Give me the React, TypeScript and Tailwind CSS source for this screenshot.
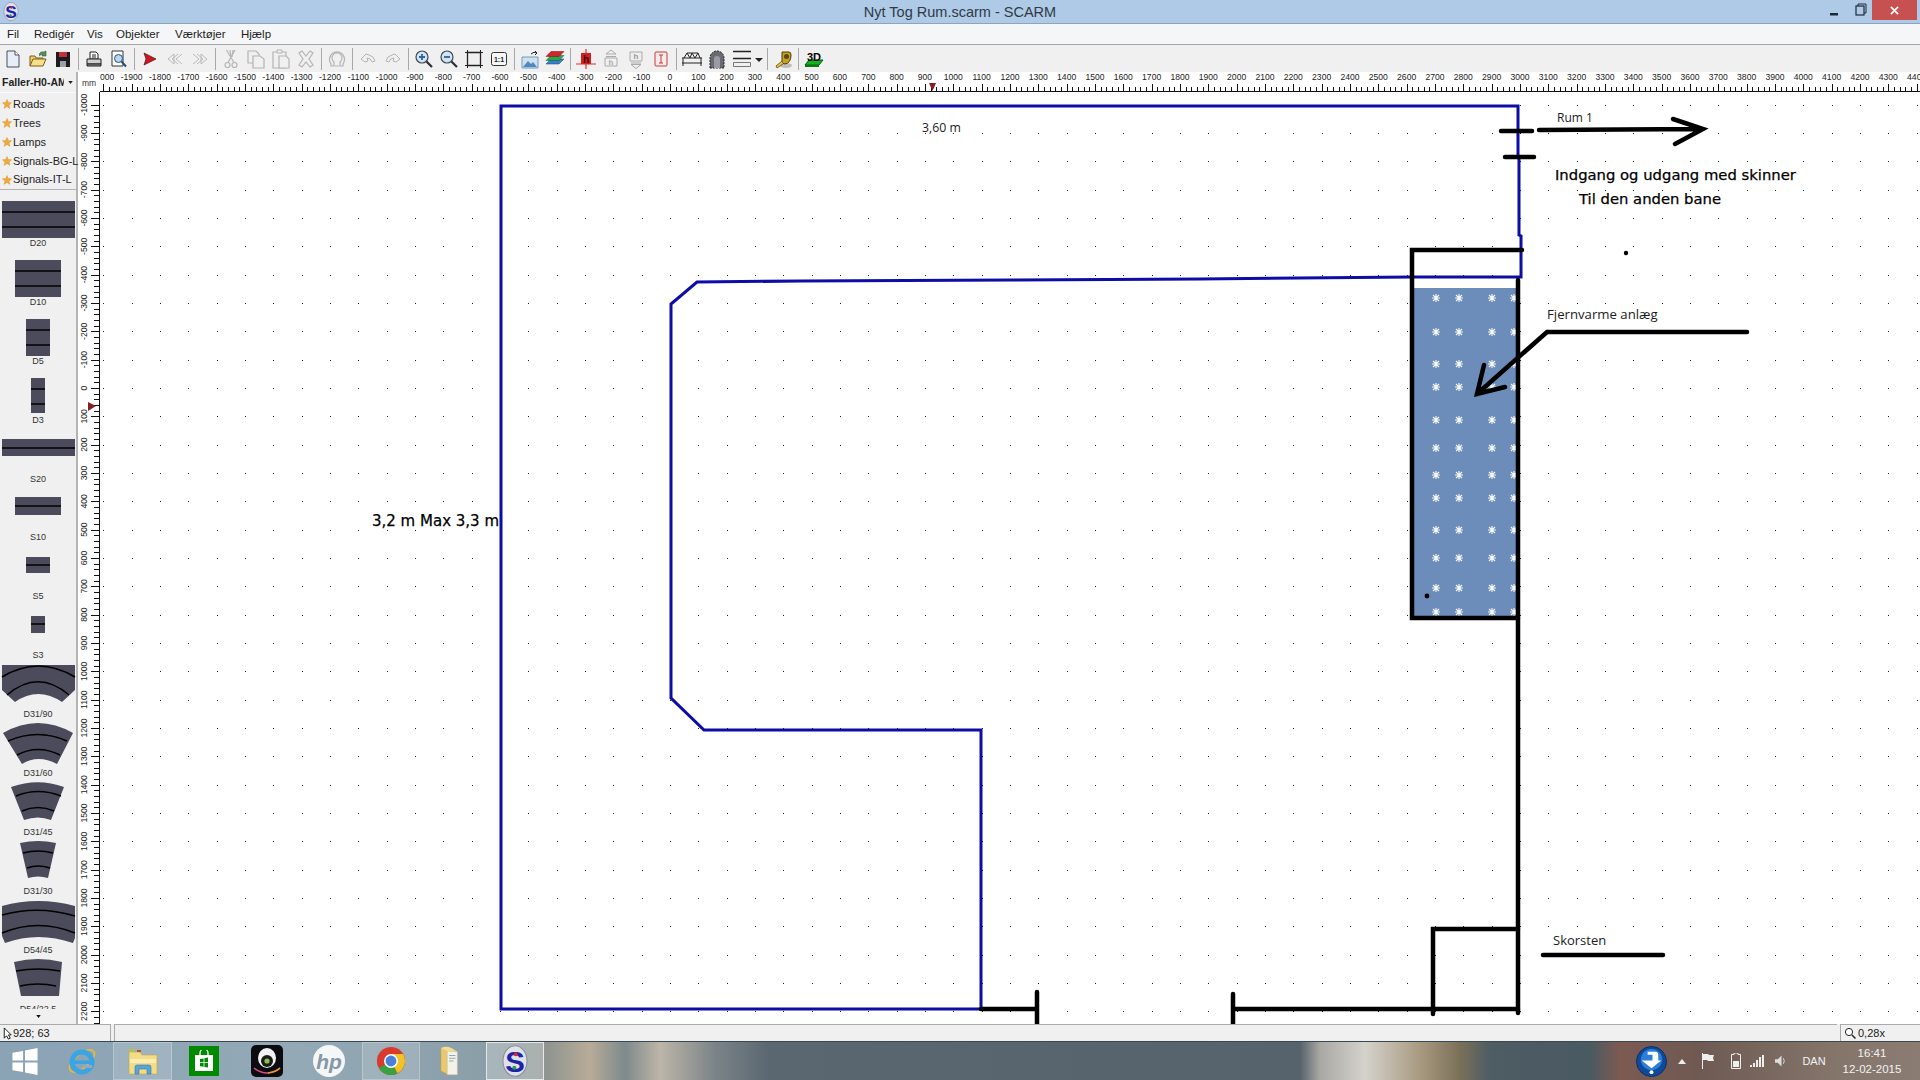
import React from 'react';

const ORIGIN_X = 670;
const ORIGIN_Y = 388;
const STEP = 28.333;

const snap = (v: number) => Math.round(v) + 0.5;

function makeDots() {
  let d = '';
  for (let i = -20; i < 45; i++) {
    for (let j = -10; j < 23; j++) {
      d += `M${Math.round(ORIGIN_X + i * STEP)} ${Math.round(ORIGIN_Y + j * STEP)}h1v1h-1z`;
    }
  }
  return d;
}

function TopRuler() {
  let ticks = 'M100 91.5H1920';
  for (let k = -100; k < 225; k++) {
    const x = snap(ORIGIN_X + (k * STEP) / 5);
    if (x < 100) continue;
    ticks += `M${x} 91V${k % 5 === 0 ? 84 : 87}`;
  }
  const labels = Array.from({ length: 65 }, (_, i) => (i - 20) * 100);
  return (
    <svg className="block h-[20px] w-[1820px]" viewBox="100 72 1820 20">
      <path d={ticks} stroke="#111" fill="none" />
      {labels.map((v) => (
        <text key={v} x={ORIGIN_X + (v / 100) * STEP} y={77} textAnchor="middle" dominantBaseline="central" fontSize="8.6" fill="#222">
          {v}
        </text>
      ))}
      <polygon points="929,83 936,83 932.5,91" fill="#8a1c24" />
    </svg>
  );
}

function LeftRuler() {
  let ticks = 'M99.5 92V1024';
  for (let k = -50; k < 115; k++) {
    const y = snap(ORIGIN_Y + (k * STEP) / 5);
    if (y < 92) continue;
    ticks += `M99 ${y}H${k % 5 === 0 ? 91 : 94}`;
  }
  const labels = Array.from({ length: 33 }, (_, i) => (i - 10) * 100);
  return (
    <svg className="block h-[932px] w-[22px]" viewBox="78 92 22 932">
      <path d={ticks} stroke="#111" fill="none" />
      {labels.map((v) => {
        const y = ORIGIN_Y + (v / 100) * STEP;
        return (
          <text key={v} transform={`translate(84 ${y}) rotate(-90)`} textAnchor="middle" dominantBaseline="central" fontSize="8.6" fill="#222">
            {v}
          </text>
        );
      })}
      <polygon points="88,402 88,411 96,406" fill="#8a1c24" />
    </svg>
  );
}

const HEAT_COLS = [1436, 1459, 1492, 1514];
const HEAT_ROWS = [298, 332, 364, 387, 420, 448, 475, 498, 530, 558, 588, 612];

function Canvas() {
  return (
    <svg className="block h-[932px] w-[1820px]" viewBox="100 92 1820 932">
      <path d={makeDots()} fill="#222" />

      {/* fjernvarme */}
      <rect x="1414" y="288" width="102" height="328" fill="#6c8cb9" />
      {HEAT_COLS.map((x) =>
        HEAT_ROWS.map((y) => (
          <path
            key={`${x}-${y}`}
            d={`M${x - 4} ${y}h8M${x} ${y - 4}v8M${x - 3} ${y - 3}l6 6M${x + 3} ${y - 3}l-6 6`}
            stroke="#f2f5fa"
            strokeWidth="1.2"
          />
        ))
      )}

      <g fill="none" stroke="#0d0da6" strokeWidth="3">
        <path d="M501 106H1518V155L1519 160V235L1521 236V277H1412L1200 279L1010 280L801 281L697 282L671 304V698L704 730H981V1009H501Z" />
      </g>

      <g fill="none" stroke="#000" strokeWidth="4.5" strokeLinecap="round">
        <path d="M1522 250H1412V618H1518" />
        <path d="M1518 280V1013" />
        <path d="M981 1009H1037M1037 992V1028" />
        <path d="M1233 994V1026M1233 1009H1518" />
        <path d="M1518 929H1433V1014" />
        <path d="M1543 955H1663" />
        <path d="M1747 332H1547L1477 394M1484 365L1477 394L1505 387" />
        <path d="M1539 130L1703 129M1673 119L1703 129L1675 144" />
        <path d="M1501 131H1532M1505 157H1534" />
      </g>
      <circle cx="1626" cy="253" r="2.2" fill="#000" />
      <circle cx="1427" cy="596" r="2.4" fill="#000" />

      <g dominantBaseline="central" fill="#1c1c1c">
        <text x="922" y="127" fontSize="12.3" className="[font-family:'Open_Sans',sans-serif]">3,60 m</text>
        <text x="372" y="521" fontSize="15" fill="#000" stroke="#000" strokeWidth="0.25" className="[font-family:'DejaVu_Sans',sans-serif]">3,2 m Max 3,3 m</text>
        <text x="1557" y="117" fontSize="12" className="[font-family:'Open_Sans',sans-serif]">Rum 1</text>
        <text x="1555" y="174" fontSize="14.8" fill="#000" stroke="#000" strokeWidth="0.25" className="[font-family:'DejaVu_Sans',sans-serif]">Indgang og udgang med skinner</text>
        <text x="1579" y="198" fontSize="14.8" fill="#000" stroke="#000" strokeWidth="0.25" className="[font-family:'DejaVu_Sans',sans-serif]">Til den anden bane</text>
        <text x="1547" y="314" fontSize="13.2" className="[font-family:'Open_Sans',sans-serif]">Fjernvarme anlæg</text>
        <text x="1553" y="940" fontSize="13" className="[font-family:'Open_Sans',sans-serif]">Skorsten</text>
      </g>
    </svg>
  );
}

function Straight({ x, w, y, h, lines }: { x: number; w: number; y: number; h: number; lines: number[] }) {
  return (
    <>
      <rect x={x} y={y} width={w} height={h} fill="#4b4b5c" />
      {lines.map((l) => (
        <path key={l} d={`M${x} ${l}h${w}`} stroke="#000" strokeWidth="1.5" />
      ))}
    </>
  );
}

function Curve({ body, lines, dy = -8 }: { body: string; lines: string[]; dy?: number }) {
  return (
    <g transform={`translate(0 ${dy})`}>
      <path d={body} fill="#4b4b5c" />
      {lines.map((l) => (
        <path key={l} d={l} fill="none" stroke="#000" strokeWidth="1.5" />
      ))}
    </g>
  );
}

const PIECES: { label: string; shape: React.ReactNode }[] = [
  { label: 'D20', shape: <Straight x={2} w={73} y={0} h={37} lines={[11, 26]} /> },
  { label: 'D10', shape: <Straight x={15} w={46} y={0} h={37} lines={[11, 26]} /> },
  { label: 'D5', shape: <Straight x={26} w={24} y={0} h={37} lines={[11, 26]} /> },
  { label: 'D3', shape: <Straight x={31} w={14} y={0} h={35} lines={[11, 26]} /> },
  { label: 'S20', shape: <Straight x={2} w={73} y={2} h={17} lines={[11]} /> },
  { label: 'S10', shape: <Straight x={15} w={46} y={2} h={18} lines={[11]} /> },
  { label: 'S5', shape: <Straight x={26} w={24} y={3} h={16} lines={[11]} /> },
  { label: 'S3', shape: <Straight x={31} w={14} y={3} h={17} lines={[11]} /> },
  {
    label: 'D31/90',
    shape: <Curve body="M2 1H75V26L62 38Q38 22 15 38L2 26Z" lines={['M2 13Q38 -9 75 13', 'M7 31Q38 4.5 69 31']} />,
  },
  {
    label: 'D31/60',
    shape: <Curve body="M3 10Q38 -10 73 10L57 41Q38 31 22 41Z" lines={['M8 18Q38 5 67 18', 'M17 32Q38 21 60 32']} />,
  },
  {
    label: 'D31/45',
    shape: <Curve body="M11 5Q38 -4.5 64 5L51 38Q38 33 24 38Z" lines={['M16 14Q38 5 61 14', 'M22 29Q38 22 54 29']} />,
  },
  {
    label: 'D31/30',
    shape: <Curve body="M20 2Q38 -2 56 2L48 37Q38 34 28 37Z" lines={['M23 12Q38 8 53 12', 'M27 27Q38 23 50 27']} />,
  },
  {
    label: 'D54/45',
    shape: <Curve dy={-7} body="M2 5Q38 -5 75 5V37L73 42Q38 30 5 42L2 35Z" lines={['M2 14Q38 4 75 15', 'M2 32Q38 17 75 32']} />,
  },
  {
    label: 'D54/22.5',
    shape: <Curve body="M14 3Q38 -3 62 3L59 37H21Z" lines={['M16 12Q38 8 60 12', 'M20 27Q38 23 56 27']} />,
  },
];

const Star = () => (
  <svg viewBox="0 0 10 10" className="h-[10px] w-[10px] shrink-0">
    <polygon points="5,0.5 6.3,3.6 9.6,3.8 7,6 7.9,9.4 5,7.5 2.1,9.4 3,6 0.4,3.8 3.7,3.6" fill="#f2a93b" stroke="#d98a1c" strokeWidth="0.4" />
  </svg>
);

function LeftPanel() {
  return (
    <div className="flex h-full w-[78px] shrink-0 flex-col border-r-2 border-[#b4b4b4] bg-[#f0f0f0]">
      <div className="flex h-[21px] shrink-0 items-center border-b border-[#fafafa] pl-[2px]">
        <span className="w-[62px] overflow-hidden whitespace-nowrap text-[10.5px] font-bold leading-none text-[#222]">Faller-H0-AM</span>
        <svg viewBox="0 0 6 4" className="ml-[4px] h-[3px] w-[5px]">
          <polygon points="0,0 6,0 3,4" fill="#222" />
        </svg>
      </div>
      <div className="flex h-[97px] shrink-0 flex-col border-b border-[#b4b4b4] pt-[2px]">
        {['Roads', 'Trees', 'Lamps', 'Signals-BG-L', 'Signals-IT-L'].map((t) => (
          <div key={t} className="flex h-[19px] items-center gap-[1px] pl-[2px] text-[11px] text-[#222]">
            <Star />
            <span className="whitespace-nowrap">{t}</span>
          </div>
        ))}
      </div>
      <div className="flex-1 overflow-hidden pt-[11px]">
        {PIECES.map((p) => (
          <div key={p.label} className="flex h-[58.9px] flex-col items-center overflow-visible">
            <svg viewBox="0 0 76 36" className="block h-[36px] w-[76px] shrink-0 overflow-visible">
              {p.shape}
            </svg>
            <span className="h-[12px] text-[9px] leading-[12px] text-[#333]">{p.label}</span>
          </div>
        ))}
      </div>
      <div className="flex h-[15px] shrink-0 items-center justify-center">
        <svg viewBox="0 0 6 4" className="h-[3px] w-[5px]">
          <polygon points="0,0 6,0 3,4" fill="#111" />
        </svg>
      </div>
    </div>
  );
}

/* toolbar icons: 20x20 box, drawn to match */
const gray = { fill: 'none', stroke: '#b4b4b4', strokeWidth: 1.2 } as const;

const ICONS: Record<string, React.ReactNode> = {
  new: (
    <>
      <path d="M4 2h8l4 4v12H4z" fill="#e8eef8" stroke="#45505c" />
      <path d="M12 2v4h4" fill="#fff" stroke="#45505c" />
    </>
  ),
  open: (
    <>
      <path d="M2 17V7h5l1 2h7v2" fill="#f2d16b" stroke="#7a5a18" />
      <path d="M2 17l3-7h13l-3 7z" fill="#f7e08c" stroke="#7a5a18" />
      <path d="M11 5q2-3 5-2l2-1v5h-4l1-1q-2-1-4 1" fill="#5a8f5a" stroke="#2f5f3a" strokeWidth="0.6" />
    </>
  ),
  save: (
    <>
      <path d="M3 3h14v15H3z" fill="#1c1c20" />
      <path d="M6 3h8v5H6z" fill="#c6303a" />
      <path d="M7 12h6v6H7z" fill="#9aa0a8" />
    </>
  ),
  print: (
    <>
      <path d="M6 3h6l2 2v5H6z" fill="#fff" stroke="#222" />
      <path d="M8 6h4M8 8h4" stroke="#222" />
      <path d="M3 10h14v5H3z" fill="#cfcfcf" stroke="#222" />
      <path d="M3 15h14v2H3z" fill="#8e8e8e" stroke="#222" />
    </>
  ),
  preview: (
    <>
      <path d="M3 2h11v15H3z" fill="#fff" stroke="#333" />
      <circle cx="9.5" cy="9.5" r="4" fill="#b8d6ee" stroke="#24507a" />
      <path d="M12.5 12.5l4.5 5" stroke="#24507a" strokeWidth="2" />
    </>
  ),
  play: <path d="M4 4l12 6-12 6 2-6z" fill="#cc1620" stroke="#501018" strokeWidth="0.7" />,
  prev: <path d="M9 5l-6 5 6 5V5zM17 5l-6 5 6 5M13 5l-6 5 6 5" {...gray} strokeWidth="0.9" />,
  next: <path d="M3 5l6 5-6 5M7 5l6 5-6 5M11 5l6 5-6 5V5z" {...gray} strokeWidth="0.9" />,
  cut: (
    <>
      <circle cx="6.5" cy="16" r="2.5" {...gray} />
      <circle cx="13.5" cy="16" r="2.5" {...gray} />
      <path d="M7 13.5L14 1M5.5 1l7.5 12.5M9 1L10 8M11 8l1-7" {...gray} />
    </>
  ),
  copy: (
    <>
      <path d="M2 2h8l3 3v9H2z" {...gray} />
      <path d="M7 7h7l4 3v9H7z" fill="#f0f0f0" stroke="#b4b4b4" strokeWidth="1.2" />
    </>
  ),
  paste: (
    <>
      <path d="M2 3h13v16H2z" {...gray} />
      <path d="M6 1h5v3H6z" fill="#f0f0f0" stroke="#b4b4b4" />
      <path d="M8 7h7l3 3v9H8z" fill="#f0f0f0" stroke="#b4b4b4" strokeWidth="1.2" />
    </>
  ),
  del: <path d="M3 4l3-2 4 5 4-5 3 2-4 6 4 6-3 2-4-5-4 5-3-2 4-6z" {...gray} />,
  rotate: <path d="M7 17V13a5 5 0 1 1 6 0v4h3v-2l1-2a7.5 7.5 0 1 0-14 0l1 2v2zM8 17h4" {...gray} />,
  undo: <path d="M3 10l5-5 3 1q5 1 6 6l-3 1q-1-4-5-4l1 3-3 1z" {...gray} strokeWidth="1" />,
  redo: <path d="M17 10l-5-5-3 1q-5 1-6 6l3 1q1-4 5-4l-1 3 3 1z" {...gray} strokeWidth="1" />,
  zoomIn: (
    <>
      <circle cx="8" cy="8" r="6" fill="#d5e3ef" stroke="#3a4a58" strokeWidth="1.2" />
      <path d="M5 8h6M8 5v6" stroke="#2a64a8" strokeWidth="1.8" />
      <path d="M12.5 12.5l5.5 5.5" stroke="#2a3038" strokeWidth="2.2" />
    </>
  ),
  zoomOut: (
    <>
      <circle cx="8" cy="8" r="6" fill="#d5e3ef" stroke="#3a4a58" strokeWidth="1.2" />
      <path d="M5 8h6" stroke="#2a64a8" strokeWidth="1.8" />
      <path d="M12.5 12.5l5.5 5.5" stroke="#2a3038" strokeWidth="2.2" />
    </>
  ),
  fit: (
    <>
      <path d="M3.5 3.5h13v13h-13z" fill="none" stroke="#222" strokeWidth="1.3" />
      <path d="M1 3.5h5M14 3.5h5M1 16.5h5M14 16.5h5M3.5 1v5M16.5 1v5M3.5 14v5M16.5 14v5" stroke="#222" />
    </>
  ),
  one: (
    <>
      <rect x="2.5" y="3.5" width="15" height="13" rx="2" fill="#f6f6f6" stroke="#333" />
      <text x="10" y="10.2" textAnchor="middle" dominantBaseline="central" fontSize="7" fontWeight="700" fill="#222">1:1</text>
    </>
  ),
  image: (
    <>
      <path d="M2 8h16v11H2z" fill="#cfe0ee" stroke="#6f9ac0" />
      <path d="M3 18l5-6 3 3 2-2 4 5z" fill="#4f88bc" />
      <path d="M11 5q3-3 6-1M15 2l2 2-2 2" fill="none" stroke="#222" />
    </>
  ),
  layers: (
    <>
      <path d="M1 15l5-5h13l-5 5z" fill="#3b7fd0" stroke="#1a3f72" strokeWidth="0.5" />
      <path d="M1 11.5l5-5h13l-5 5z" fill="#27a84a" stroke="#125a26" strokeWidth="0.5" />
      <path d="M1 7.5l5-5h13l-5 5z" fill="#d32530" stroke="#701016" strokeWidth="0.5" />
    </>
  ),
  track: (
    <>
      <path d="M10 0v20M0 15h20" stroke="#e02a2a" strokeWidth="1.2" />
      <rect x="5" y="4" width="10" height="11" fill="#d42020" />
      <text x="10" y="10" textAnchor="middle" dominantBaseline="central" fontSize="10" fontWeight="700" fill="#3a0808">h</text>
    </>
  ),
  hUp: (
    <>
      <path d="M5 5l5-4 5 4z" fill="none" stroke="#aaa" />
      <path d="M5 7.5h10M4 9h12v8H4z" fill="none" stroke="#aaa" />
      <text x="10" y="13" textAnchor="middle" dominantBaseline="central" fontSize="8" fontWeight="700" fill="#aaa">h</text>
    </>
  ),
  hDown: (
    <>
      <path d="M4 3h12v9H4z" fill="#eee" stroke="#aaa" />
      <text x="10" y="7.5" textAnchor="middle" dominantBaseline="central" fontSize="8" fontWeight="700" fill="#999">h</text>
      <path d="M5 14h10M5 15.5l5 4 5-4z" fill="none" stroke="#aaa" />
    </>
  ),
  height: (
    <>
      <rect x="4" y="3" width="12" height="14" rx="1" fill="#fbeaea" stroke="#c43a3a" />
      <path d="M8 6h4M10 6v8M8 14h4" stroke="#c43a3a" />
    </>
  ),
  bridge: <path d="M0 9h20M1 9v8M19 9v8M0 14h20M2 9l3-5 3 5 2-5 3 5 3-5 2 5M5 4h11" fill="none" stroke="#222" />,
  tunnel: (
    <>
      <path d="M3 19V9a7 7 0 0 1 14 0v10z" fill="#6a6a72" stroke="#222" strokeDasharray="2 1" />
      <path d="M7 19V10a3 3 0 0 1 6 0v9z" fill="#9a9aa2" />
    </>
  ),
  lines: (
    <>
      <path d="M1 2.5h18M1 9.5h18" stroke="#222" strokeWidth="1.4" />
      <path d="M1.5 13.5h17v4h-17z" fill="none" stroke="#777" />
    </>
  ),
  drop: <polygon points="6,9 14,9 10,13" fill="#222" />,
  tape: (
    <>
      <ellipse cx="13" cy="16.5" rx="6" ry="2.5" fill="#bdbdbd" />
      <path d="M9 3h7q2 0 2 3q0 8-6 9q-3 0-3-3z" fill="#caa01f" stroke="#4a3a10" />
      <circle cx="13.5" cy="7.5" r="2.5" fill="#5a4a1a" />
      <path d="M9 12l-6 5 1 2 6-4" fill="#e6c33a" stroke="#4a3a10" strokeWidth="0.7" />
    </>
  ),
  threeD: (
    <>
      <path d="M1 16l4-5h14l-4 5z" fill="#12b31c" stroke="#0a5a10" />
      <path d="M1 16h14v2H1z" fill="#0a7a12" />
      <text x="10" y="8" textAnchor="middle" dominantBaseline="central" fontSize="11" fontWeight="700" fill="#000">3D</text>
    </>
  ),
};

const TOOLBAR = [
  ['new', 'open', 'save'],
  ['print', 'preview'],
  ['play', 'prev', 'next'],
  ['cut', 'copy', 'paste', 'del'],
  ['rotate'],
  ['undo', 'redo'],
  ['zoomIn', 'zoomOut', 'fit', 'one'],
  ['image', 'layers'],
  ['track', 'hUp', 'hDown', 'height'],
  ['bridge', 'tunnel', 'lines', 'drop'],
  ['tape'],
  ['threeD'],
];

function Toolbar() {
  return (
    <div className="flex h-[28px] shrink-0 items-center border-t border-[#a6a6a6] bg-[#f0f0f0]">
      {TOOLBAR.map((group, i) => (
        <React.Fragment key={i}>
          {i > 0 && (
            <div className="flex h-full w-[6px] items-center justify-center">
              <div className="h-[22px] w-[1px] bg-[#a8a8a8]" />
            </div>
          )}
          {group.map((name) => (
            <div key={name} className={name === 'drop' ? 'flex w-[10px] justify-center' : 'flex w-[25px] justify-center'}>
              <svg viewBox={name === 'drop' ? '5 0 10 20' : '0 0 20 20'} className={name === 'drop' ? 'h-[20px] w-[10px]' : 'h-[20px] w-[20px]'}>
                {ICONS[name]}
              </svg>
            </div>
          ))}
        </React.Fragment>
      ))}
    </div>
  );
}

const MENUS: [string, string][] = [
  ['Fil', 'w-[27px]'],
  ['Redigér', 'w-[53px]'],
  ['Vis', 'w-[29px]'],
  ['Objekter', 'w-[59px]'],
  ['Værktøjer', 'w-[66px]'],
  ['Hjælp', 'w-[40px]'],
];

const ScarmLogo = ({ size }: { size: string }) => (
  <svg viewBox="0 0 20 24" className={size}>
    <ellipse cx="10" cy="12" rx="9" ry="11.5" fill="#dfe2ea" stroke="#8a8ea0" strokeWidth="0.8" />
    <text x="10" y="12.5" textAnchor="middle" dominantBaseline="central" fontSize="22" fontWeight="700" fill="#1e22a8">S</text>
    <circle cx="10.5" cy="7" r="1.5" fill="#d0263a" />
    <circle cx="9.5" cy="17" r="1.5" fill="#26a04a" />
  </svg>
);

function TaskIcon({ w, active, dim, children }: { w: string; active?: boolean; dim?: boolean; children: React.ReactNode }) {
  const box = active ? 'border border-[#e4e8ea] bg-[#ffffff40]' : dim ? 'border border-[#ffffff40] bg-[#ffffff26]' : '';
  return <div className={`flex h-full shrink-0 items-center justify-center ${w} ${box}`}>{children}</div>;
}

function Taskbar() {
  return (
    <div className="flex h-[39px] shrink-0 items-stretch border-t border-[#3c4850] bg-[linear-gradient(90deg,#8aa3b5_0,#93a9b6_300px,#8a9fa8_480px,#8f9590_548px,#b8ab98_590px,#7e8a8c_625px,#bdb5a8_660px,#7a8488_715px,#5a6670_770px,#56626c_1300px,#a9a8a4_1320px,#d5d2cc_1365px,#a89a80_1420px,#7a7058_1460px,#4e5c64_1490px,#4a5a62_1590px,#7c5a52_1620px,#6e5a52_1700px,#85766c_1840px,#8a7c72_1920px)]">
      <TaskIcon w="w-[50px]">
        <svg viewBox="0 0 28 28" className="h-[27px] w-[28px]">
          <path d="M1 5l11-2v10H1zM14 2.6L27 0v13H14zM1 15h11v10L1 23zM14 15h13v13l-13-2.6z" fill="#fff" />
        </svg>
      </TaskIcon>
      <div className="w-[63px] shrink-0">
        <div className="flex h-full items-center justify-center">
          <svg viewBox="0 0 32 32" className="h-[32px] w-[32px]">
            <ellipse cx="16" cy="16" rx="15" ry="7" transform="rotate(-40 16 16)" fill="none" stroke="#e0b83a" strokeWidth="2" />
            <circle cx="16" cy="17" r="10" fill="none" stroke="#3aa4e4" strokeWidth="5" />
            <rect x="8" y="15.5" width="16" height="3.5" fill="#3aa4e4" />
            <rect x="18" y="20" width="8" height="3" fill="#9aa9b5" />
          </svg>
        </div>
      </div>
      <TaskIcon w="w-[59px]" dim>
        <svg viewBox="0 0 32 30" className="h-[30px] w-[32px]">
          <path d="M2 6h11l2 3h15v19H2z" fill="#f3dc86" stroke="#c6a64a" strokeWidth="0.6" />
          <path d="M2 3h6v3H2z" fill="#b8c050" />
          <rect x="10" y="4" width="4" height="2" fill="#c05030" />
          <path d="M3 13h26v4H3z" fill="#fbecb0" />
          <path d="M8 28v-7q0-2 2-2h12q2 0 2 2v7h-4v-5h-8v5z" fill="#5aa4d8" stroke="#2f78b0" strokeWidth="0.6" />
        </svg>
      </TaskIcon>
      <TaskIcon w="w-[64px]">
        <div className="flex h-[30px] w-[30px] items-center justify-center bg-[#008a00]">
          <svg viewBox="0 0 20 22" className="h-[22px] w-[20px]">
            <path d="M6 5V3a4 4 0 0 1 8 0v2" fill="none" stroke="#fff" strokeWidth="1.3" />
            <path d="M1 5h18v16H1z" fill="#fff" />
            <path d="M6 9l3.6-.6v3.8H6zM10.4 8.2L14 7.6v4.6h-3.6zM6 13h3.6v3.8L6 16.2zM10.4 13H14v4.6l-3.6-.6z" fill="#008a00" />
          </svg>
        </div>
      </TaskIcon>
      <TaskIcon w="w-[62px]">
        <svg viewBox="0 0 32 32" className="h-[32px] w-[32px]">
          <rect width="32" height="32" rx="5" fill="#0c0c10" />
          <ellipse cx="16" cy="13" rx="9" ry="10" fill="#f2f2f2" />
          <circle cx="16" cy="16" r="6" fill="#1a1c18" />
          <circle cx="16" cy="16" r="2.6" fill="#8fc04a" />
          <path d="M3 23q13 10 26 0" fill="none" stroke="#e04a8a" strokeWidth="1.5" />
          <path d="M17 28q8-1 12-5" fill="none" stroke="#e6a020" strokeWidth="1.5" />
        </svg>
      </TaskIcon>
      <TaskIcon w="w-[62px]">
        <svg viewBox="0 0 32 32" className="h-[32px] w-[32px]">
          <circle cx="16" cy="16" r="16" fill="#f4f6f8" />
          <text x="16" y="16.5" textAnchor="middle" dominantBaseline="central" fontSize="21" fontStyle="italic" fontWeight="700" fill="#8598a6">hp</text>
        </svg>
      </TaskIcon>
      <div className="flex w-[62px] shrink-0 items-stretch justify-center">
        <TaskIcon w="w-[58px]" dim>
          <svg viewBox="0 0 32 32" className="h-[30px] w-[30px]">
            <circle cx="16" cy="16" r="15" fill="#d83a2e" />
            <path d="M16 16L3 23.5A15 15 0 0 0 16 31q4 0 7-2z" fill="#3aa040" />
            <path d="M16 16L23 29A15 15 0 0 0 29 8.5L16 8.5z" fill="#f0c426" />
            <circle cx="16" cy="16" r="7.4" fill="#fff" />
            <circle cx="16" cy="16" r="5.8" fill="#4a80d8" />
          </svg>
        </TaskIcon>
      </div>
      <TaskIcon w="w-[56px]">
        <svg viewBox="0 0 24 34" className="h-[32px] w-[22px]">
          <path d="M2 3l8 2v27L2 28z" fill="#e8c870" stroke="#b8963c" strokeWidth="0.5" />
          <path d="M9 6l11 1v25H9z" fill="#f4f2e8" stroke="#c8c0a0" strokeWidth="0.5" />
          <path d="M11 11h7M11 14h7M11 17h5" stroke="#6a8ab0" strokeWidth="0.8" />
          <path d="M2 3q5-3 12 0l6 4-11-1z" fill="#f2dc90" />
        </svg>
      </TaskIcon>
      <div className="w-[8px] shrink-0" />
      <TaskIcon w="w-[58px]" active>
        <ScarmLogo size="h-[32px] w-[28px]" />
      </TaskIcon>

      <div className="flex-1" />

      <div className="flex w-[37px] shrink-0 items-center justify-center">
        <svg viewBox="0 0 32 32" className="h-[31px] w-[31px]">
          <circle cx="16" cy="16" r="15.5" fill="#0f4a9a" stroke="#0a2f66" />
          <circle cx="16" cy="14" r="11" fill="#2a80d8" />
          <path d="M12 6h8q3 0 3 3v6h3l-10 8-10-8h11V9h-5z" fill="#fff" />
          <circle cx="16" cy="27" r="2" fill="#fff" />
        </svg>
      </div>
      <div className="flex w-[24px] shrink-0 items-center justify-center">
        <svg viewBox="0 0 8 5" className="h-[5px] w-[8px]">
          <polygon points="4,0 8,5 0,5" fill="#eee" />
        </svg>
      </div>
      <div className="flex w-[28px] shrink-0 items-center justify-center">
        <svg viewBox="0 0 16 16" className="h-[16px] w-[16px]">
          <path d="M2.5 0v16" stroke="#eee" />
          <path d="M3 1h5l1 1h5l-1 3 1 3H8L7 7H3z" fill="#eee" />
        </svg>
      </div>
      <div className="flex w-[28px] shrink-0 items-center justify-center">
        <svg viewBox="0 0 10 16" className="h-[16px] w-[10px]">
          <path d="M3 0h4v1.5h2.5v14H.5v-14H3z" fill="none" stroke="#eee" />
          <rect x="2" y="8" width="6" height="6" fill="#eee" />
        </svg>
      </div>
      <div className="flex w-[14px] shrink-0 items-center justify-center">
        <svg viewBox="0 0 14 12" className="h-[12px] w-[14px]">
          <path d="M0 10h2v2H0zM3 8h2v4H3zM6 5h2v7H6zM9 2h2v10H9zM12 0h2v12h-2z" fill="#eee" />
        </svg>
      </div>
      <div className="flex w-[34px] shrink-0 items-center justify-center">
        <svg viewBox="0 0 14 14" className="h-[14px] w-[13px]">
          <path d="M0 5h3l4-4v12l-4-4H0z" fill="#dcdcdc" />
          <path d="M9 4q2 3 0 6" fill="none" stroke="#dcdcdc" />
        </svg>
      </div>
      <div className="flex w-[32px] shrink-0 items-center justify-center text-[11px] text-[#f2f2f2]">DAN</div>
      <div className="flex w-[84px] shrink-0 flex-col items-center justify-center text-[11.5px] leading-[16px] text-[#f2f2f2]">
        <span>16:41</span>
        <span>12-02-2015</span>
      </div>
      <div className="w-[6px] shrink-0" />
    </div>
  );
}

export default function App() {
  return (
    <div className="flex h-[1080px] w-[1920px] flex-col overflow-hidden bg-white [font-family:'Liberation_Sans',sans-serif]">
      {/* title bar */}
      <div className="relative flex h-[24px] shrink-0 items-center justify-center border-b border-[#8ba5bd] bg-[#aecae6] pt-[2px]">
        <div className="absolute left-[3px] top-[2px]">
          <ScarmLogo size="h-[19px] w-[16px]" />
        </div>
        <span className="text-[14.5px] text-[#2f3a46]">Nyt Tog Rum.scarm - SCARM</span>
        <div className="absolute right-[3px] top-0 flex h-[20px] items-center">
          <svg viewBox="0 0 40 20" className="mr-[5px] h-[20px] w-[40px]">
            <rect x="3" y="13" width="8" height="2.5" fill="#1c2a38" />
            <rect x="29" y="6" width="8" height="9" fill="none" stroke="#1c2a38" strokeWidth="1.2" />
            <path d="M31 6V4h8v9h-2" fill="none" stroke="#1c2a38" />
          </svg>
          <div className="flex h-[20px] w-[45px] items-center justify-center bg-[#c75050]">
            <svg viewBox="0 0 10 10" className="h-[9px] w-[9px]">
              <path d="M1 1l8 8M9 1l-8 8" stroke="#fff" strokeWidth="1.8" />
            </svg>
          </div>
        </div>
      </div>

      {/* menu */}
      <div className="flex h-[20px] shrink-0 items-center bg-[#f5f6f7] pl-[7px] pt-[2px] text-[11.5px] text-[#1c1c1c]">
        {MENUS.map(([t, w]) => (
          <span key={t} className={w}>{t}</span>
        ))}
      </div>

      <Toolbar />

      {/* work area */}
      <div className="flex min-h-0 flex-1">
        <LeftPanel />
        <div className="flex min-w-0 flex-1 flex-col">
          <div className="flex h-[20px] shrink-0">
            <div className="flex w-[22px] shrink-0 items-center justify-center bg-white pt-[2px] text-[8.5px] text-[#333]">mm</div>
            <TopRuler />
          </div>
          <div className="flex min-h-0 flex-1">
            <LeftRuler />
            <Canvas />
          </div>
        </div>
      </div>

      {/* status bar */}
      <div className="flex h-[17px] shrink-0 gap-[3px] bg-[#f0f0f0] text-[11px] text-[#222]">
        <div className="flex w-[111px] items-center gap-[1px] border-t border-r border-[#aaaaaa] pl-[3px]">
          <svg viewBox="0 0 9 14" className="h-[13px] w-[9px]">
            <path d="M1 1v11l2.5-2.5L5.5 13l2-1-2-3.5H8.5z" fill="#fff" stroke="#111" />
          </svg>
          <span>928; 63</span>
        </div>
        <div className="flex-1 border-t border-l border-[#aaaaaa]" />
        <div className="flex w-[80px] items-center gap-[2px] border-t border-l border-[#aaaaaa] pl-[3px]">
          <svg viewBox="0 0 12 12" className="h-[12px] w-[12px]">
            <circle cx="5" cy="5" r="3.6" fill="#fff" stroke="#222" />
            <path d="M8 8l3.5 3.5" stroke="#222" strokeWidth="1.5" />
          </svg>
          <span>0,28x</span>
        </div>
      </div>

      <Taskbar />
    </div>
  );
}
